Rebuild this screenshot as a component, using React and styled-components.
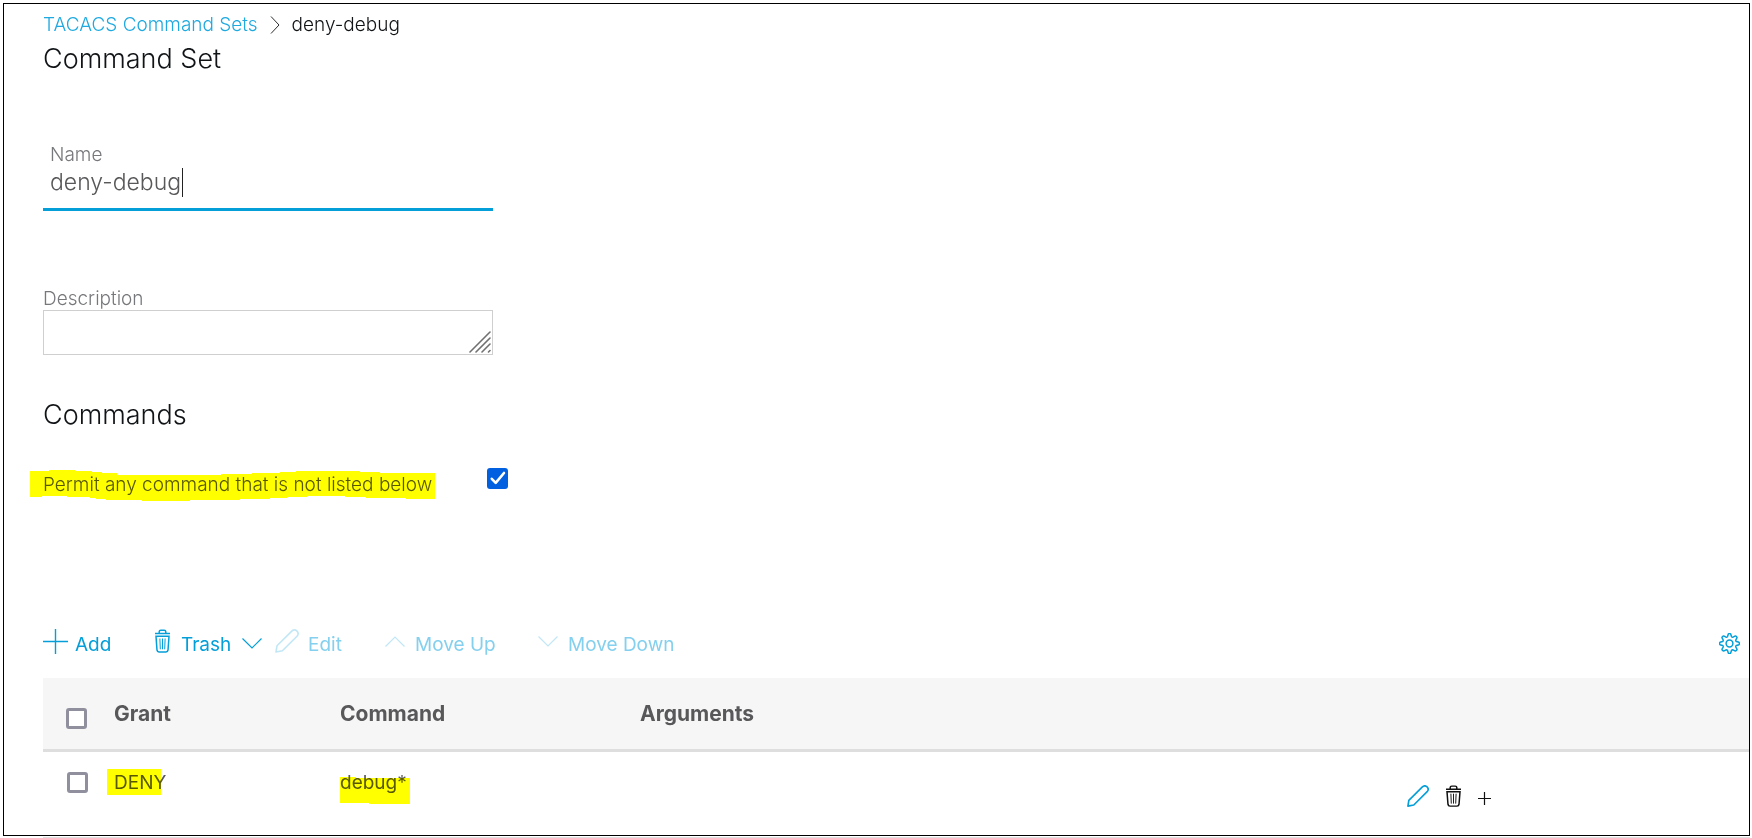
import React, { useState } from "react";
import styled, { createGlobalStyle } from "styled-components";

const color = {
  accent: "#049fd9",
  link: "#1fa9e0",
  text: "#58585b",
  ink: "#111417",
  muted: "#77787b",
  line: "#dfdfdf",
};

const GlobalStyle = createGlobalStyle`
  *, *::before, *::after { box-sizing: border-box; }
  body {
    margin: 0;
    background: #fff;
    color: ${color.text};
    font-family: Inter, "Liberation Sans", sans-serif;
    font-size: 19px;
    font-weight: 300;
    line-height: 24px;
  }
  button, input, textarea { font: inherit; color: inherit; }
`;

const Page = styled.div`
  padding: 3px 2px 0 3px;
`;

const Frame = styled.main`
  border: 1px solid #000;
  padding: 9px 0 0 39px;
`;

const NextRowEdge = styled.div`
  height: 1px;
  margin: 1px 0 0 40px;
  background: ${color.line};
`;

const Breadcrumb = styled.nav`
  display: flex;
  align-items: center;
  gap: 12px;
  color: ${color.ink};

  a {
    color: ${color.link};
    text-decoration: none;
  }
`;

const Heading = styled.h1`
  margin: 0;
  color: ${color.ink};
  font-size: 27px;
  font-weight: 300;
  line-height: 44px;
`;

const SubHeading = styled(Heading).attrs({ as: "h2" })`
  margin-top: 38px;
`;

const Field = styled.div`
  position: relative;
  display: flex;
  flex-direction: column;
  width: 450px;
  max-width: 100%;
  margin-top: ${(p) => p.$space}px;
`;

const FieldLabel = styled.label`
  padding: 2px 0 0 ${(p) => (p.$inset ? 7 : 0)}px;
  color: ${color.muted};
  line-height: 22px;
`;

const TextInput = styled.input`
  height: 45px;
  padding: 0 7px 10px;
  border: 0;
  border-bottom: 3px solid ${color.accent};
  outline: 0;
  background: transparent;
  caret-color: transparent;
  font-size: 23px;
  line-height: 32px;
`;

const Caret = styled.span`
  position: absolute;
  left: 139px;
  top: 26px;
  width: 1px;
  height: 29px;
  background: #222;
`;

const TextArea = styled.textarea`
  height: 45px;
  padding: 8px;
  border: 1px solid #cfcfcf;
  outline: 0;
  resize: none;
`;

const Grip = styled.svg`
  position: absolute;
  right: 2px;
  bottom: 2px;
  pointer-events: none;
`;

const PermitRow = styled.div`
  display: flex;
  align-items: flex-start;
  height: 28px;
  margin-top: 31px;
`;

const PermitLabel = styled.label`
  width: 444px;
  padding-top: 5px;
`;

const Marked = styled.span`
  position: relative;
  display: inline-block;
  vertical-align: top;
`;

const Marker = styled.svg`
  position: absolute;
  left: ${(p) => p.$left}px;
  top: ${(p) => p.$top}px;
  fill: #ff0;
  mix-blend-mode: multiply;
  pointer-events: none;
`;

const CheckWrap = styled.span`
  position: relative;
  display: block;
  width: 21px;
  height: 21px;

  svg {
    position: absolute;
    inset: 0;
    pointer-events: none;
    visibility: hidden;
  }
  input:checked + svg { visibility: visible; }
`;

const CheckInput = styled.input`
  appearance: none;
  display: block;
  width: 21px;
  height: 21px;
  margin: 0;
  border: 3px solid #8f8f9d;
  border-radius: 3px;
  background: #fff;

  &:checked {
    border-color: #0060df;
    background: #0060df;
  }
`;

const Toolbar = styled.div`
  display: flex;
  align-items: flex-start;
  height: 28px;
  margin: 133px 0 21px;
`;

const ToolButton = styled.button`
  display: flex;
  align-items: flex-start;
  flex: none;
  gap: ${(p) => p.$gap}px;
  width: ${(p) => p.$width}px;
  padding: 0;
  border: 0;
  background: none;
  color: ${color.accent};
  font-weight: 400;
  text-align: left;

  &:disabled { color: #84d0ee; }
  &:disabled svg { opacity: 0.5; }
`;

const ToolText = styled.span`
  padding-top: 4px;
  white-space: nowrap;
`;

const SettingsButton = styled.button`
  margin: 4px 9px 0 auto;
  padding: 0;
  border: 0;
  background: none;
  color: ${color.accent};

  svg { display: block; }
`;

const Table = styled.table`
  width: 100%;
  border-collapse: separate;
  border-spacing: 0;
  table-layout: fixed;
`;

const Column = styled.col`
  width: ${(p) => (p.$width ? `${p.$width}px` : "auto")};
`;

const HeadCell = styled.th`
  height: 74px;
  padding: ${(p) => (p.$check ? "30px 0 0 23px" : "24px 0 0 0")};
  border-bottom: 3px solid #dedede;
  background: #f6f6f6;
  font-size: 21px;
  font-weight: 700;
  text-align: left;
  vertical-align: top;
`;

const Cell = styled.td`
  height: 83px;
  padding: ${(p) => (p.$check ? "20px 0 0 24px" : "19px 0 0 0")};
  font-weight: 400;
  vertical-align: top;
`;

const Actions = styled.div`
  display: flex;
  align-items: center;
  gap: 17px;
  padding-top: 14px;
`;

const ActionButton = styled.button`
  padding: ${(p) => (p.$low ? "4px 0 0" : "0")};
  border: 0;
  background: none;
  color: ${(p) => (p.$accent ? color.accent : "#111")};

  svg { display: block; }
`;

const stroke = { fill: "none", stroke: "currentColor" };

const PlusIcon = ({ size, width }) => (
  <svg width={size} height={size} viewBox={`0 0 ${size} ${size}`} {...stroke} strokeWidth={width} aria-hidden="true">
    <path d={`M${Math.floor(size / 2) + 0.5} 0V${size}M0 ${Math.floor(size / 2) + 0.5}H${size}`} />
  </svg>
);

const TrashIcon = ({ width = 15, height = 24 }) => (
  <svg width={width} height={height} viewBox="0 0 15 24" preserveAspectRatio="none" {...stroke} strokeWidth="1.5" aria-hidden="true">
    <path d="M0 4.6H15M4.2 4.4V2.8Q4.2 1.2 5.8 1.2H9.2Q10.8 1.2 10.8 2.8V4.4M1 7.3H14L13 21.2Q12.8 23 11 23H4Q2.2 23 2 21.2Z" />
    <path strokeWidth="1" d="M4.9 9.5L5.3 20.3M7.5 9.5V20.3M10.1 9.5L9.7 20.3" />
  </svg>
);

const PencilIcon = ({ size = 24, weight = 1.6 }) => (
  <svg width={size} height={size} viewBox="0 0 24 24" {...stroke} strokeWidth={weight} strokeLinejoin="round" aria-hidden="true">
    <path d="M1 23L2 16.8L16.8 2.1Q19.4 -0.3 22 2.1Q24.3 4.7 22 7.3L7.4 21.8Z" />
  </svg>
);

const Chevron = ({ d, w = 20, h = 11, top = 0, weight = 1.2 }) => (
  <svg width={w} height={h + top} viewBox={`0 ${-top} ${w} ${h + top}`} {...stroke} strokeWidth={weight} aria-hidden="true">
    <path d={d} />
  </svg>
);

const gearPath = (() => {
  const parts = [];
  for (let i = 0; i < 8; i += 1) {
    const at = (deg, r) => {
      const a = ((i * 45 + deg - 90) * Math.PI) / 180;
      return `${(10.5 + r * Math.cos(a)).toFixed(2)} ${(10.5 + r * Math.sin(a)).toFixed(2)}`;
    };
    parts.push(`${i ? "L" : "M"}${at(-16, 7.2)}L${at(-7, 9.6)}Q${at(0, 10.4)} ${at(7, 9.6)}L${at(16, 7.2)}Q${at(22.5, 6.6)} ${at(29, 7.2)}`);
  }
  return `${parts.join("")}Z`;
})();

const GearIcon = () => (
  <svg width="21" height="21" viewBox="0 0 21 21" {...stroke} strokeWidth="1.5" strokeLinejoin="round" aria-hidden="true">
    <path d={gearPath} />
    <circle cx="10.5" cy="10.5" r="3.4" />
  </svg>
);

function Checkbox(props) {
  return (
    <CheckWrap>
      <CheckInput type="checkbox" {...props} />
      <svg width="21" height="21" viewBox="0 0 21 21" fill="none" stroke="#fff" strokeWidth="2.6" aria-hidden="true">
        <path d="M4.8 10.8L8.7 14.8L17 5" strokeLinecap="round" strokeLinejoin="round" />
      </svg>
    </CheckWrap>
  );
}

export default function App() {
  const [name, setName] = useState("deny-debug");

  return (
    <Page>
      <GlobalStyle />
      <Frame>
        <Breadcrumb aria-label="Breadcrumb">
          <a href="#command-sets">TACACS Command Sets</a>
          <Chevron w={10} h={18} weight={0.9} d="M1 0.5L9 9L1 17.5" />
          <span>deny-debug</span>
        </Breadcrumb>
        <Heading>Command Set</Heading>

        <Field $space={61}>
          <FieldLabel htmlFor="name" $inset>Name</FieldLabel>
          <TextInput id="name" value={name} onChange={(e) => setName(e.target.value)} />
          <Caret />
        </Field>

        <Field $space={75}>
          <FieldLabel htmlFor="description">Description</FieldLabel>
          <TextArea id="description" />
          <Grip width="22" height="22" viewBox="0 0 22 22" {...stroke} stroke="#707070" strokeWidth="1.6" strokeLinecap="round" aria-hidden="true">
            <path d="M1 21L21 1M7 21L21 7M13 21L21 13M19.5 21L21 19.5" />
          </Grip>
        </Field>

        <SubHeading>Commands</SubHeading>

        <PermitRow>
          <PermitLabel htmlFor="permit">
            <Marked>
              Permit any command that is not listed below
              <Marker $left={-13} $top={-3} width="405" height="31" viewBox="0 0 405 31">
                <path d="M0 1H19V0H45V1H62V2H72V3H87V5H191V4H222V3H250V2H266V1H330V2H350V3H405V29H376V28H336V27H315V26H277V27H257V28H240V29H210V30H160V31H112V30H76V29H66V28H60V27H37V26H12V27H0Z" />
              </Marker>
            </Marked>
          </PermitLabel>
          <Checkbox id="permit" defaultChecked />
        </PermitRow>

        <Toolbar>
          <ToolButton type="button" $width={112} $gap={7}>
            <PlusIcon size={25} width={1.4} />
            <ToolText>Add</ToolText>
          </ToolButton>
          <ToolButton type="button" $width={120} $gap={11}>
            <TrashIcon />
            <ToolText>Trash</ToolText>
            <Chevron top={9} d="M0.5 0.5L10 10L19.5 0.5" />
          </ToolButton>
          <ToolButton type="button" $width={110} $gap={9} disabled>
            <PencilIcon />
            <ToolText>Edit</ToolText>
          </ToolButton>
          <ToolButton type="button" $width={153} $gap={10} disabled>
            <Chevron top={7} d="M0.5 10.5L10 1L19.5 10.5" />
            <ToolText>Move Up</ToolText>
          </ToolButton>
          <ToolButton type="button" $gap={10} disabled>
            <Chevron top={7} d="M0.5 0.5L10 10L19.5 0.5" />
            <ToolText>Move Down</ToolText>
          </ToolButton>
          <SettingsButton type="button" aria-label="Settings">
            <GearIcon />
          </SettingsButton>
        </Toolbar>

        <Table>
          <colgroup>
            <Column $width={71} />
            <Column $width={226} />
            <Column $width={300} />
            <Column />
            <Column $width={342} />
          </colgroup>
          <thead>
            <tr>
              <HeadCell $check><Checkbox aria-label="Select all" /></HeadCell>
              <HeadCell>Grant</HeadCell>
              <HeadCell>Command</HeadCell>
              <HeadCell>Arguments</HeadCell>
              <HeadCell aria-label="Actions" />
            </tr>
          </thead>
          <tbody>
            <tr>
              <Cell $check><Checkbox aria-label="Select DENY debug*" /></Cell>
              <Cell>
                <Marked>
                  DENY
                  <Marker $left={-7} $top={-2} width="54" height="26" viewBox="0 0 54 26">
                    <path d="M0 0H54V26H0Z" />
                  </Marker>
                </Marked>
              </Cell>
              <Cell>
                <Marked>
                  debug*
                  <Marker $left={0} $top={6} width="70" height="27" viewBox="0 0 70 27">
                    <path d="M0 0H16V1H70V27H29V26H0Z" />
                  </Marker>
                </Marked>
              </Cell>
              <Cell />
              <Cell>
                <Actions>
                  <ActionButton type="button" aria-label="Edit row" $accent>
                    <PencilIcon size={22} weight={1.8} />
                  </ActionButton>
                  <ActionButton type="button" aria-label="Delete row">
                    <TrashIcon height={22} />
                  </ActionButton>
                  <ActionButton type="button" aria-label="Add row" $low>
                    <PlusIcon size={13} width={1.2} />
                  </ActionButton>
                </Actions>
              </Cell>
            </tr>
          </tbody>
        </Table>
      </Frame>
      <NextRowEdge />
    </Page>
  );
}
